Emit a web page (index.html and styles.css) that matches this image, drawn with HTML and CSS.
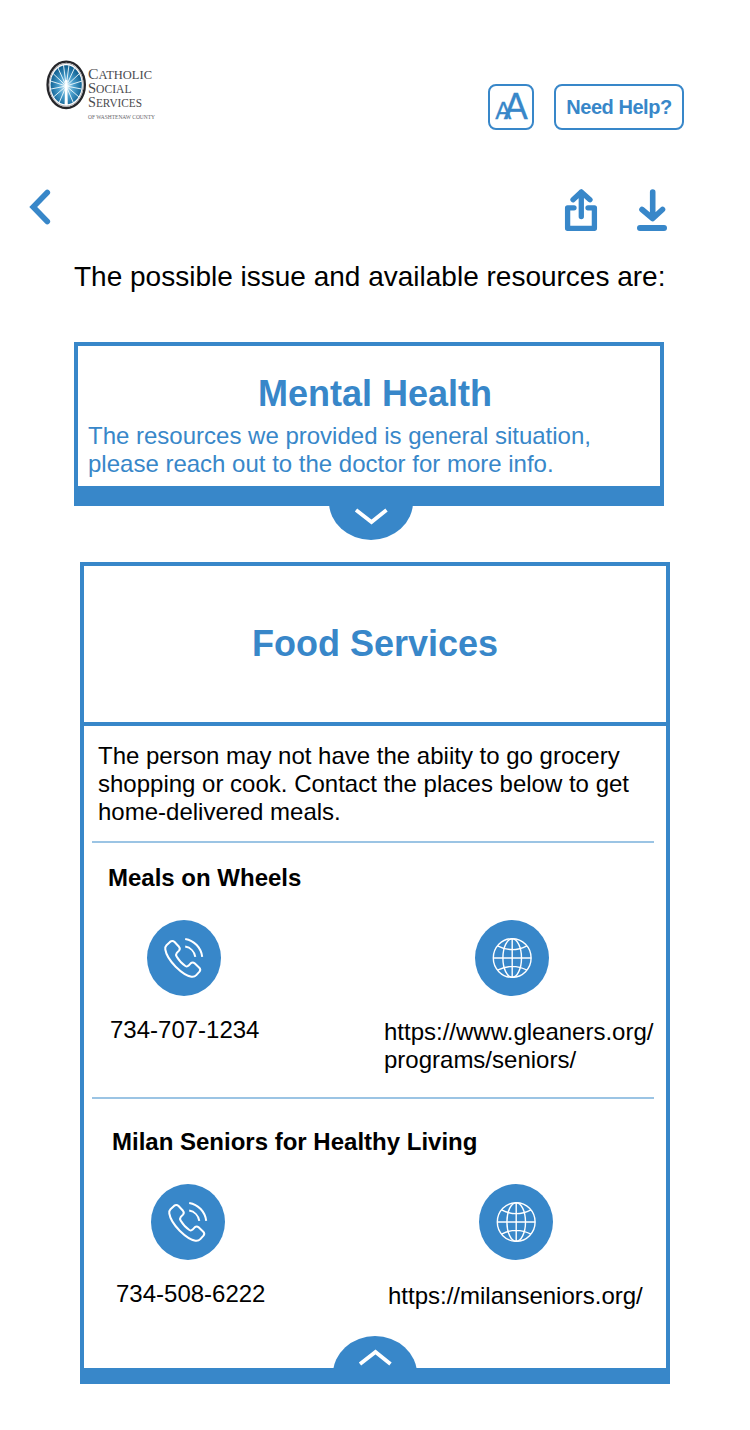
FILE: index.html
```html
<!DOCTYPE html>
<html lang="en">
<head>
<meta charset="utf-8">
<title>Available resources</title>
<link rel="stylesheet" href="styles.css">
</head>
<body>
<svg class="defs" width="0" height="0" aria-hidden="true">
  <symbol id="phone" viewBox="0 0 74 76">
    <g fill="none" stroke="#fff" stroke-width="2" stroke-linecap="round" stroke-linejoin="round">
      <path d="M19.500 25.200 L23 21.900 Q25.400 20 27.600 22 L32 26.800 Q33.600 28.700 32 30.600 L29.800 32.900 Q28.500 34.600 29.600 36.500 Q33.400 42.800 38.400 46 Q40.100 47 41.600 45.600 L43.700 43.300 Q45.700 41.600 47.600 43.300 L52.300 47.700 Q54.100 49.600 52.500 51.600 L49.300 55.100 Q47.400 57.100 44.500 56.700 Q37.800 55.700 28.700 46.700 Q19.500 37.300 18.300 29.500 Q17.900 26.800 19.500 25.200Z"/>
      <path stroke-linecap="butt" d="M38.200 19 A20.500 20.500 0 0 1 55.200 36.800 M38.200 26.600 A12.500 12.500 0 0 1 48.300 36.800"/>
    </g>
  </symbol>
  <symbol id="globe" viewBox="0 0 74 76">
    <g fill="none" stroke="#fff" stroke-width="1.4">
      <ellipse cx="37.200" cy="38" rx="18.900" ry="19.300"/>
      <ellipse cx="37.200" cy="38" rx="9.300" ry="19.300"/>
      <path d="M37.200 18.500V57.500M18.200 38H56.200M22.500 25.800Q37.200 33.500 51.900 25.800M22.500 50.200Q37.200 42.500 51.900 50.200"/>
    </g>
  </symbol>
</svg>
<main class="page">
  <header class="header">
    <svg class="logo" width="112" height="64" viewBox="0 0 112 64">
      <defs>
        <radialGradient id="glow" cx="50%" cy="55%" r="55%">
          <stop offset="0" stop-color="#d3edf8"/>
          <stop offset=".45" stop-color="#4a9fcd"/>
          <stop offset="1" stop-color="#0a5a8c"/>
        </radialGradient>
      </defs>
      <ellipse cx="20.200" cy="24.800" rx="18.600" ry="23.200" fill="#fff" stroke="#26262a" stroke-width="2.400"/>
      <ellipse cx="20.200" cy="24.800" rx="17" ry="21.400" fill="none" stroke="#a5a5aa" stroke-width="1"/>
      <ellipse cx="20.200" cy="24.800" rx="15.600" ry="19.600" fill="url(#glow)"/>
      <path d="M20.200 26L17.500 5M20.200 26L23 5M20.200 26L11.500 7M20.200 26L29 7M20.200 26L6.500 13M20.200 26L34 13M20.200 26L4.500 21M20.200 26L36 21M20.200 26L5 29M20.200 26L35.500 29M20.200 26L7.500 37M20.200 26L33 37M20.200 26L13 43M20.200 26L27.500 43" stroke="#f2fafd" stroke-width=".9"/>
      <path d="M18.600 45L19.200 23H21.200L21.800 45Z" fill="#fff"/>
      <circle cx="20.200" cy="21.500" r="1.400" fill="#fff"/>
      <g class="logo-name">
        <text x="42" y="19.300" textLength="64" lengthAdjust="spacingAndGlyphs"><tspan class="cap">C</tspan>ATHOLIC</text>
        <text x="42" y="33" textLength="43.500" lengthAdjust="spacingAndGlyphs"><tspan class="cap">S</tspan>OCIAL</text>
        <text x="42" y="46.700" textLength="54" lengthAdjust="spacingAndGlyphs"><tspan class="cap">S</tspan>ERVICES</text>
      </g>
      <text class="logo-county" x="42" y="59" textLength="67" lengthAdjust="spacingAndGlyphs">OF WASHTENAW COUNTY</text>
    </svg>
    <div class="header-actions">
      <button class="button text-size" aria-label="Text size"><span class="small-a">A</span><span class="large-a">A</span></button>
      <button class="button help">Need Help?</button>
    </div>
  </header>
  <nav class="toolbar">
    <svg class="back" width="22" height="36" viewBox="0 0 22 36"><path d="M18.300 3.500L4.200 18L18.300 32.500" fill="none" stroke="#3887c9" stroke-width="5.600" stroke-linecap="round" stroke-linejoin="miter"/></svg>
    <div class="tools">
      <svg width="34" height="44" viewBox="0 0 34 44"><path d="M17.300 28.500V4M9 11.700L17.300 4L26 11.700M10 19.800H3.600V40.300H30.400V19.800H24" fill="none" stroke="#3887c9" stroke-width="5.300" stroke-linecap="round" stroke-linejoin="round"/></svg>
      <svg width="30" height="44" viewBox="0 0 30 44"><path d="M15.700 4V29M5 21.500L15.700 30.500L25.500 21.500" fill="none" stroke="#3887c9" stroke-width="5.600" stroke-linecap="round" stroke-linejoin="round"/><path d="M3 40H27" stroke="#3887c9" stroke-width="6" stroke-linecap="round"/></svg>
    </div>
  </nav>
  <h1 class="intro">The possible issue and available resources are:</h1>

  <section class="card mental">
    <h2 class="card-title">Mental Health</h2>
    <p class="card-note">The resources we provided is general situation,<br>please reach out to the doctor for more info.</p>
    <svg class="tab tab-down" width="84" height="34" viewBox="0 0 84 34"><ellipse cx="42" cy="-4" rx="42" ry="38" fill="#3887c9"/><path d="M27 4L42.500 16L57.500 4" fill="none" stroke="#fff" stroke-width="3.800"/></svg>
  </section>

  <section class="card food">
    <div class="food-head"><h2 class="card-title">Food Services</h2></div>
    <p class="food-text">The person may not have the abiity to go grocery<br>shopping or cook. Contact the places below to get<br>home-delivered meals.</p>
    <article class="place meals">
      <h3 class="place-name">Meals on Wheels</h3>
      <div class="contacts">
        <div class="contact"><svg class="badge" width="74" height="76"><ellipse cx="37" cy="38" rx="37" ry="38" fill="#3887c9"/><use href="#phone"/></svg><p class="phone-number">734-707-1234</p></div>
        <div class="contact web"><svg class="badge" width="74" height="76"><ellipse cx="37" cy="38" rx="37" ry="38" fill="#3887c9"/><use href="#globe"/></svg><p class="url">https://www.gleaners.org/<br>programs/seniors/</p></div>
      </div>
    </article>
    <article class="place milan">
      <h3 class="place-name">Milan Seniors for Healthy Living</h3>
      <div class="contacts">
        <div class="contact"><svg class="badge" width="74" height="76"><ellipse cx="37" cy="38" rx="37" ry="38" fill="#3887c9"/><use href="#phone"/></svg><p class="phone-number">734-508-6222</p></div>
        <div class="contact web"><svg class="badge" width="74" height="76"><ellipse cx="37" cy="38" rx="37" ry="38" fill="#3887c9"/><use href="#globe"/></svg><p class="url">https://milanseniors.org/</p></div>
      </div>
    </article>
    <svg class="tab tab-up" width="84" height="32" viewBox="0 0 84 32"><ellipse cx="42" cy="38" rx="42" ry="38" fill="#3887c9"/><path d="M27 28L42.500 16L57.500 28" fill="none" stroke="#fff" stroke-width="3.800"/></svg>
  </section>
</main>
</body>
</html>
```
FILE: styles.css
```css
* { box-sizing: border-box; }
body {
  margin: 0;
  background: #fff;
  color: #000;
  font: 24px/28px "Liberation Sans", Arial, sans-serif;
}
h1, h2, h3, p { margin: 0; }
svg { display: block; flex: none; }
.defs { position: absolute; }
.page { width: 750px; height: 1430px; overflow: hidden; padding-top: 60px; }

.header {
  display: flex;
  justify-content: space-between;
  height: 128px;
  padding: 0 66px 0 46px;
}
.logo-name { font: 11.500px "Liberation Serif", serif; fill: #4a4a4e; }
.cap { font-size: 14.500px; }
.logo-county { font: 5.500px "Liberation Serif", serif; fill: #66666a; }
.header-actions { display: flex; gap: 20px; padding-top: 24px; }
.button {
  display: flex;
  align-items: center;
  justify-content: center;
  height: 46px;
  padding: 0;
  border: 2px solid #3887c9;
  border-radius: 8px;
  background: #fff;
  color: #3887c9;
  font: bold 20px/24px "Liberation Sans", Arial, sans-serif;
  white-space: nowrap;
}
.text-size { width: 46px; align-items: baseline; padding: 2px 0 0 1px; font-weight: normal; -webkit-text-stroke: 0.3px #3887c9; }
.small-a { font-size: 24px; line-height: 38px; }
.large-a { margin-left: -7.500px; font-size: 36px; line-height: 38px; }
.help { width: 130px; letter-spacing: -0.450px; }

.toolbar {
  display: flex;
  justify-content: space-between;
  height: 73px;
  padding: 0 83px 0 29px;
}
.back { margin-top: 1px; }
.tools { display: flex; gap: 39px; }
.intro { padding-left: 74px; font-size: 28px; line-height: 32px; font-weight: normal; white-space: nowrap; }

.card { position: relative; width: 590px; border: 4px solid #3887c9; }
.card-title { color: #3887c9; font-size: 36px; line-height: 40px; text-align: center; }
.card-note { padding-left: 10px; color: #3887c9; white-space: nowrap; }
.mental { height: 164px; margin: 49px 0 0 74px; padding-top: 28px; border-bottom-width: 20px; }
.mental .card-title { padding-left: 12px; margin-bottom: 8px; }
.tab { position: absolute; }
.tab-down { left: 251px; bottom: -54px; }
.tab-up { left: 249px; bottom: 0; }

.food { height: 822px; margin: 56px 0 0 80px; border-bottom-width: 16px; }
.food-head {
  height: 160px;
  padding-top: 58px;
  border-bottom: 4px solid #3887c9;
}
.food-text { height: 115px; padding: 16px 0 0 14px; white-space: nowrap; }
.place { height: 256px; margin: 0 12.500px 0 8px; border-top: 2px solid #9bc4e4; }
.place-name { font-size: 24px; line-height: 28px; white-space: nowrap; }
.contacts { display: grid; grid-template-columns: 274px 1fr; margin-top: 28px; white-space: nowrap; }
.meals { padding: 21px 0 0 16px; }
.milan { padding: 29px 0 0 20px; }
.badge { margin-left: 39px; }
.web .badge { margin-left: 93px; }
.phone-number { padding: 20px 0 0 2px; }
.milan .phone-number { padding-left: 4px; }
.url { padding: 22px 0 0 2px; }
```
